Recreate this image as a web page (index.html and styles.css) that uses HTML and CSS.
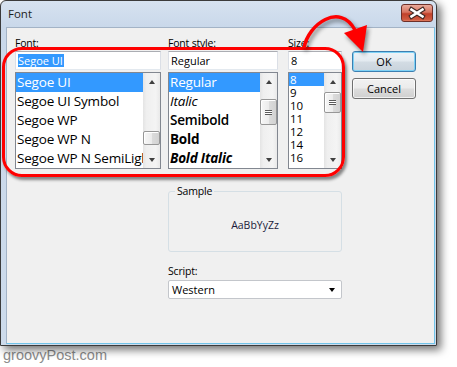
FILE: index.html
```html
<!DOCTYPE html>
<html lang="en">
<head>
    <meta charset="UTF-8">
    <title>Font</title>
    <link rel="stylesheet" href="styles.css">
</head>
<body>
    <div class="window">
        <div class="titlebar">
            <span class="title">Font</span>
            <button class="close">
                <svg viewBox="0 0 30 16" width="30" height="16">
                    <path d="M9.5 4.5 L20.5 11.5 M20.5 4.5 L9.5 11.5" stroke="#3b2420" stroke-width="4.6" stroke-linecap="square" fill="none"/>
                    <path d="M9.5 4.5 L20.5 11.5 M20.5 4.5 L9.5 11.5" stroke="#fff" stroke-width="2.6" stroke-linecap="square" fill="none"/>
                </svg>
            </button>
        </div>
        <div class="client">
            <div class="pickers">
                <div class="col col-font">
                    <span class="lbl">Font:</span>
                    <div class="textbox"><span class="sel">Segoe UI</span></div>
                    <div class="listbox">
                        <ul class="items">
                            <li class="active">Segoe UI</li>
                            <li>Segoe UI Symbol</li>
                            <li>Segoe WP</li>
                            <li>Segoe WP N</li>
                            <li>Segoe WP N SemiLight</li>
                        </ul>
                        <div class="scrollbar">
                            <span class="arrow up"></span>
                            <span class="track"><span class="thumb thumb-font"></span></span>
                            <span class="arrow down"></span>
                        </div>
                    </div>
                </div>
                <div class="col col-style">
                    <span class="lbl">Font style:</span>
                    <div class="textbox">Regular</div>
                    <div class="listbox">
                        <ul class="items">
                            <li class="active">Regular</li>
                            <li class="italic">Italic</li>
                            <li class="semibold">Semibold</li>
                            <li class="bold">Bold</li>
                            <li class="bold italic">Bold Italic</li>
                        </ul>
                        <div class="scrollbar">
                            <span class="arrow up"></span>
                            <span class="track"><span class="thumb thumb-style grip"></span></span>
                            <span class="arrow down"></span>
                        </div>
                    </div>
                </div>
                <div class="col col-size">
                    <span class="lbl">Size:</span>
                    <div class="textbox">8</div>
                    <div class="listbox">
                        <ul class="items small">
                            <li class="active">8</li>
                            <li>9</li>
                            <li>10</li>
                            <li>11</li>
                            <li>12</li>
                            <li>14</li>
                            <li>16</li>
                        </ul>
                        <div class="scrollbar">
                            <span class="arrow up"></span>
                            <span class="track"><span class="thumb thumb-size grip"></span></span>
                            <span class="arrow down"></span>
                        </div>
                    </div>
                </div>
                <div class="buttons">
                    <button class="btn default">OK</button>
                    <button class="btn">Cancel</button>
                </div>
            </div>
            <div class="lower">
                <fieldset class="sample">
                    <legend>Sample</legend>
                    <div class="sample-text">AaBbYyZz</div>
                </fieldset>
                <span class="lbl script-lbl">Script:</span>
                <div class="select">
                    <span>Western</span>
                    <span class="drop"></span>
                </div>
            </div>
        </div>

        <!-- annotation drawn over the dialog -->
        <div class="ring"></div>
        <svg class="callout" viewBox="0 0 437 100" width="437" height="100">
            <path d="M304 48 C308 24, 340 2, 355 30" stroke="#f00" stroke-width="3.5" fill="none"/>
            <polygon points="344,33 367,25 363,52" fill="#f00"/>
        </svg>
    </div>
    <div class="watermark">groovyPost.com</div>
</body>
</html>
```

FILE: styles.css
```css
* {
    box-sizing: border-box;
}
body {
    margin: 0;
    background: #fff;
    font-family: "Open Sans", "Noto Sans", sans-serif;
    color: #000;
}
.window {
    position: relative;
    width: 437px;
    height: 346px;
    display: flex;
    flex-direction: column;
    border: 1px solid #3b3b3b;
    border-radius: 6px 6px 0 0;
    background: linear-gradient(to bottom, #d6e2f0, #c9d8ea 26px, #cddbeb);
    box-shadow: 4px 4px 9px rgba(0, 0, 0, 0.55);
}
.titlebar {
    height: 26px;
    display: flex;
    align-items: flex-start;
    justify-content: space-between;
    padding: 0 3px 0 7px;
}
.title {
    font-size: 11.5px;
    line-height: 26px;
    color: #1e1e1e;
}
.close {
    margin-top: 3px;
    width: 32px;
    height: 18px;
    padding: 0;
    display: flex;
    align-items: center;
    justify-content: center;
    border: 1px solid #6e2f28;
    border-radius: 3px;
    background: linear-gradient(to bottom, #e9ab9c, #d7735f 45%, #c1402a 55%, #cf5a40 90%, #e07c60);
}
.client {
    flex: 1;
    margin: 0 1px 1px 5px;
    border: 1px solid;
    border-color: #a3b3c6 #72c4e9 #72c4e9 #a3b3c6;
    background: #f0f0f0;
    padding: 8px 0 0 8px;
}
.pickers {
    display: flex;
    align-items: flex-start;
}
.col-font {
    width: 146px;
}
.col-style {
    width: 110px;
    margin-left: 7px;
}
.col-size {
    width: 54px;
    margin-left: 10px;
}
.lbl {
    display: block;
    height: 15px;
    font-size: 10.5px;
    line-height: 15px;
    letter-spacing: -0.2px;
}
.textbox {
    height: 19px;
    border: 1px solid;
    border-color: #abadb3 #dbdfe6 #e3e9ef #dbdfe6;
    background: #fff;
    padding: 0 2px;
    font-size: 11px;
    line-height: 17px;
    white-space: nowrap;
}
.textbox .sel {
    display: inline-block;
    background: #3399ff;
    color: #fff;
    line-height: 13px;
    padding: 0 1px 0 0;
}
.listbox {
    margin-top: 2px;
    height: 97px;
    display: flex;
    border: 1px solid #828790;
    background: #fff;
}
.items {
    list-style: none;
    margin: 0;
    padding: 0;
    flex: 1;
    min-width: 0;
    overflow: hidden;
    font-size: 13.5px;
    line-height: 19px;
    letter-spacing: -0.2px;
}
.items li {
    padding-left: 1px;
    white-space: nowrap;
    overflow: hidden;
}
.items li.active {
    background: #3399ff;
    color: #fff;
}
.items.small {
    font-size: 11.5px;
    line-height: 13px;
}
.items.small li {
    overflow: visible;
}
.italic {
    font-style: italic;
}
.semibold {
    font-weight: 600;
}
.bold {
    font-weight: 700;
}
.scrollbar {
    width: 17px;
    display: flex;
    flex-direction: column;
    background: linear-gradient(to right, #e4e4e4, #efefef 20%, #f4f4f4 75%, #e9e9e9);
}
.arrow {
    height: 17px;
    display: flex;
    align-items: center;
    justify-content: center;
}
.arrow::before {
    content: '';
    border-left: 3.5px solid transparent;
    border-right: 3.5px solid transparent;
}
.arrow.up::before {
    border-bottom: 4px solid #404040;
}
.arrow.down::before {
    border-top: 4px solid #404040;
}
.track {
    flex: 1;
    display: flex;
    flex-direction: column;
}
.thumb {
    display: flex;
    align-items: center;
    justify-content: center;
    border: 1px solid #979797;
    border-radius: 2px;
    background: linear-gradient(to right, #f7f7f7, #ececec 50%, #dcdcdc 51%, #d2d2d2);
    box-shadow: inset 1px 1px 0 #fff;
}
.thumb.grip::after {
    content: '';
    width: 7px;
    height: 5px;
    background: repeating-linear-gradient(to bottom, #5a5a5a 0 1px, #fff 1px 2px);
}
.thumb-font {
    margin-top: 41px;
    height: 14px;
}
.thumb-style {
    margin-top: 9px;
    height: 26px;
}
.thumb-size {
    margin-top: 2px;
    height: 21px;
}
.buttons {
    width: 64px;
    margin-left: 10px;
    padding-top: 15px;
    display: flex;
    flex-direction: column;
    gap: 6px;
}
.btn {
    height: 21px;
    padding: 0;
    font-family: inherit;
    font-size: 11px;
    color: #000;
    border: 1px solid #707070;
    border-radius: 3px;
    background: linear-gradient(to bottom, #f2f2f2, #ebebeb 48%, #dddddd 52%, #cfcfcf);
    box-shadow: inset 0 0 0 1px rgba(255, 255, 255, 0.7);
}
.btn.default {
    border-color: #3c7fb1;
    background: linear-gradient(to bottom, #eef3f7, #e3eaf0 48%, #d3dce4 52%, #c9d3dc);
    box-shadow: inset 0 0 0 1px #7fd2f6;
}
.lower {
    margin: 15px 0 0 153px;
    width: 174px;
}
.sample {
    margin: 0;
    padding: 0;
    min-width: 0;
    border: 1px solid #d5dfe5;
    border-radius: 3px;
}
.sample legend {
    margin-left: 6px;
    padding: 0 2px;
    font-size: 10.5px;
    line-height: 15px;
    letter-spacing: -0.2px;
}
.sample-text {
    height: 52px;
    display: flex;
    align-items: center;
    justify-content: center;
    font-size: 10.5px;
    color: #1b1b3a;
}
.script-lbl {
    margin-top: 12px;
}
.select {
    margin-top: 1px;
    height: 19px;
    display: flex;
    align-items: center;
    justify-content: space-between;
    padding: 0 6px 0 3px;
    border: 1px solid #c3c6cb;
    border-radius: 2px;
    background: #fff;
    font-size: 11px;
}
.drop {
    border-left: 3.5px solid transparent;
    border-right: 3.5px solid transparent;
    border-top: 4px solid #000;
}
.ring {
    position: absolute;
    left: 1px;
    top: 46px;
    width: 343px;
    height: 130px;
    border: 3.5px solid #f00;
    border-radius: 20px;
    box-shadow: 2px 3px 3px rgba(0, 0, 0, 0.45);
    pointer-events: none;
}
.callout {
    position: absolute;
    left: -1px;
    top: -1px;
    overflow: visible;
    filter: drop-shadow(2px 3px 2px rgba(0, 0, 0, 0.45));
    pointer-events: none;
}
.watermark {
    margin-top: 1px;
    padding-left: 3px;
    font-family: "Liberation Sans", Arial, sans-serif;
    font-size: 14.5px;
    line-height: 16px;
    color: #8c8c8c;
}
```
